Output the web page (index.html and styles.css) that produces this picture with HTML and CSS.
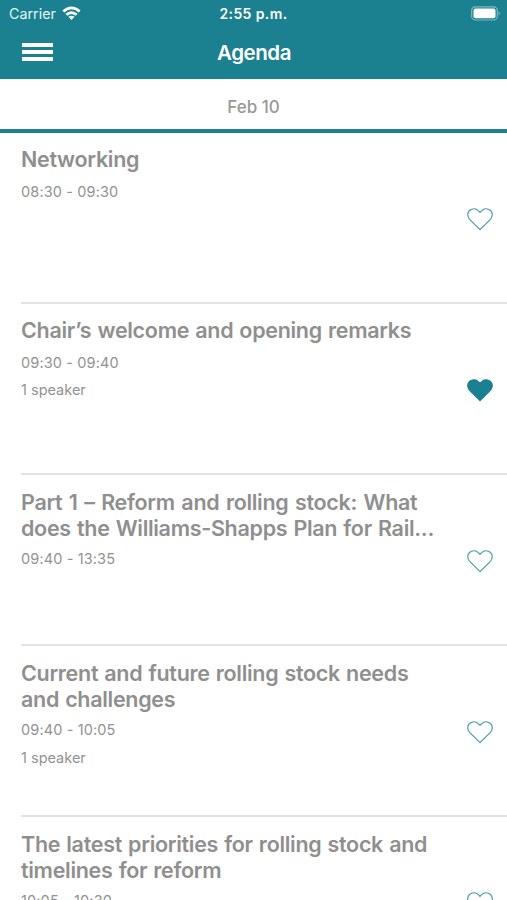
FILE: index.html
```html
<!DOCTYPE html>
<html lang="en">
<head>
<meta charset="utf-8">
<title>Agenda</title>
<link rel="stylesheet" href="styles.css">
</head>
<body>
<svg class="defs" aria-hidden="true">
  <symbol id="heart" viewBox="0 0 26 23"><path d="M13 21.700 2.600 11.300C-.1 8.400.3 4.400 2.800 2.300 5.500.1 9 .3 11.300 2.600L13 4.300 14.700 2.600C17 .3 20.500.1 23.200 2.300 25.700 4.400 26.100 8.400 23.400 11.300Z"/></symbol>
</svg>
<div class="app">
  <header class="header">
    <div class="status">
      <div class="carrier"><span>Carrier</span>
        <svg class="wifi" viewBox="0 0 19 14"><path d="M.4 4.500Q9.500-3.700 18.600 4.500L16.700 6.500Q9.500.1 2.300 6.500Z"/><path d="M3.500 7.700Q9.500 2.600 15.500 7.700L13.600 9.700Q9.500 6.200 5.400 9.700Z"/><path d="M6.500 10.800Q9.500 8.600 12.500 10.800L9.500 13.900Z"/></svg>
      </div>
      <div class="clock">2:55 p.m.</div>
      <svg class="battery" viewBox="0 0 31 15"><rect class="shell" x="1.700" y=".8" width="25.600" height="13.200" rx="3.600"/><rect class="charge" x="3.500" y="2.600" width="22" height="9.600" rx="2"/><path class="cap" d="M28.600 5.200Q31.200 7.400 28.600 9.600Z"/></svg>
    </div>
    <div class="navbar">
      <div class="menu"><i></i><i></i><i></i></div>
      <h1>Agenda</h1>
    </div>
  </header>
  <div class="date">Feb 10</div>
  <main class="sessions">
    <article class="session short"><div class="info"><h2>Networking</h2><p>08:30 - 09:30</p></div><svg class="heart"><use href="#heart"/></svg></article>
    <article class="session short"><div class="info"><h2>Chair’s welcome and opening remarks</h2><p>09:30 - 09:40</p><p class="speaker">1 speaker</p></div><svg class="heart saved"><use href="#heart"/></svg></article>
    <article class="session"><div class="info"><h2><span class="loose">Part 1 – Reform and rolling stock: What</span><br>does the Williams-Shapps Plan for Rail...</h2><p>09:40 - 13:35</p></div><svg class="heart"><use href="#heart"/></svg></article>
    <article class="session"><div class="info"><h2>Current and future rolling stock needs<br>and challenges</h2><p>09:40 - 10:05</p><p class="speaker">1 speaker</p></div><svg class="heart"><use href="#heart"/></svg></article>
    <article class="session"><div class="info"><h2>The latest priorities for rolling stock and<br>timelines for reform</h2><p>10:05 - 10:30</p></div><svg class="heart"><use href="#heart"/></svg></article>
  </main>
</div>
</body>
</html>
```
FILE: styles.css
```css
* { box-sizing: border-box; }
body { margin: 0; background: #fff; font-family: Inter, "Liberation Sans", sans-serif; }
.app { height: 900px; overflow: hidden; }
.defs { display: none; }
h1, h2, p { margin: 0; }

.header { height: 79px; background: #1b808f; color: #fff; }
.status { height: 27px; padding: 0 7px 0 9px; display: grid; grid-template-columns: 1fr auto 1fr; align-items: center; }
.carrier { display: flex; align-items: center; gap: 6px; font-size: 14.300px; color: #e4f5f6; }
.wifi { width: 19px; height: 14px; margin-top: -2px; fill: #fff; }
.clock { font-size: 14px; font-weight: 600; letter-spacing: .4px; padding-right: 2px; }
.battery { width: 31px; height: 15px; justify-self: end; margin-right: -1px; }
.shell { fill: none; stroke: #7dbac3; stroke-width: 1.200; }
.charge { fill: #fff; }
.cap { fill: #7dbac3; }

.navbar { height: 52px; padding: 0 22px; display: grid; grid-template-columns: 1fr auto 1fr; align-items: start; }
.menu { width: 31px; padding-top: 15.500px; display: grid; gap: 3.300px; }
.menu i { height: 4px; background: #fff; }
h1 { line-height: 51px; padding-left: 1px; font-size: 20.500px; font-weight: 600; letter-spacing: -.45px; }

.date { height: 54px; border-bottom: 4px solid #1b808f; line-height: 56px; text-align: center; font-size: 17px; font-weight: 500; color: #999; }

.session { height: 171px; display: flex; justify-content: space-between; align-items: center; margin-left: 21px; padding-right: 14px; border-bottom: 2px solid #e3e3e3; }
.info { align-self: flex-start; padding-top: 14px; white-space: nowrap; }
.short .info { padding-top: 13px; }
h2 { line-height: 26px; font-size: 21.500px; font-weight: 600; letter-spacing: -.3px; word-spacing: 1px; color: #8f8f8f; }
.loose { word-spacing: 1.400px; }
p { margin-top: 8px; line-height: 20px; font-size: 14.500px; letter-spacing: .13px; color: #929292; }
.short p { margin-top: 9.500px; }
.session .speaker { margin-top: 7.500px; letter-spacing: 0; }
.heart { width: 26px; height: 23px; margin-top: 4px; fill: none; stroke: #4b9fa9; stroke-width: 1.200; }
.saved { fill: #1b808f; stroke: #1b808f; }
```
